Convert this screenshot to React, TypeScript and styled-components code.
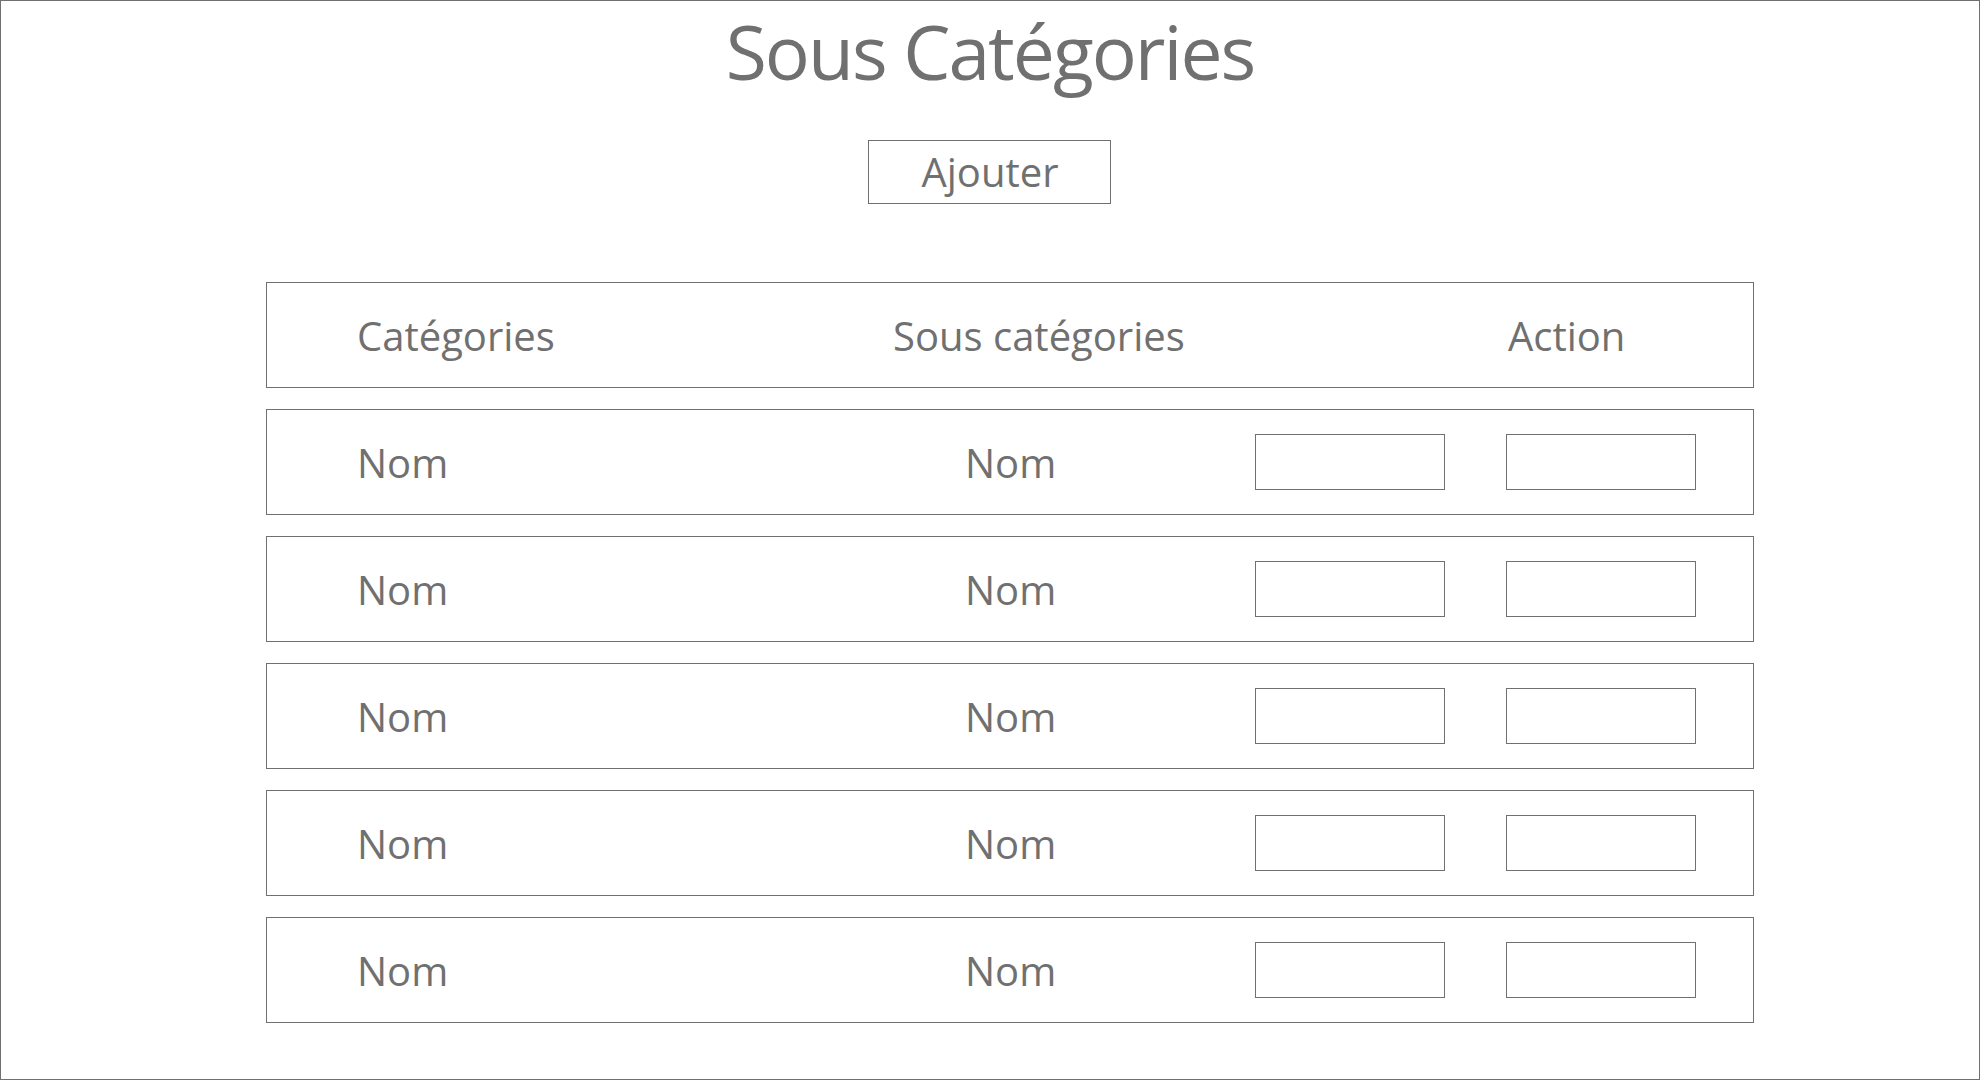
import React from 'react';
import styled, { createGlobalStyle } from 'styled-components';

const GlobalStyle = createGlobalStyle`
	html, body {
		margin: 0;
		padding: 0;
		background: #ffffff;
	}

	* {
		box-sizing: border-box;
	}
`;

const rows = ['Nom', 'Nom', 'Nom', 'Nom', 'Nom'];

function App() {
	return (
		<>
			<GlobalStyle />
			<Page>
				<TopSection>
					<Title>Sous Catégories</Title>
					<AddButton type="button">Ajouter</AddButton>
				</TopSection>
				<Table>
					<HeaderRow>
						<Cell>Catégories</Cell>
						<Cell>Sous catégories</Cell>
						<Cell>Action</Cell>
					</HeaderRow>
					{rows.map((name, index) => (
						<DataRow key={index}>
							<Cell>{name}</Cell>
							<Cell>{name}</Cell>
							<ActionGroup>
								<ActionBox />
								<ActionBox />
							</ActionGroup>
						</DataRow>
					))}
				</Table>
			</Page>
		</>
	);
}

export default App;

const Page = styled.div`
	width: 1980px;
	height: 1080px;
	border: 1px solid #707070;
	display: flex;
	flex-direction: column;
	align-items: center;

	font-family: "Open Sans", "Noto Sans", sans-serif;
	color: #707070;
	background: #ffffff;
`;

const TopSection = styled.div`
	display: flex;
	flex-direction: column;
	align-items: center;
	padding-top: 13px;
`;

const Title = styled.h1`
	margin: 0;
	font-size: 75px;
	font-weight: 400;
	line-height: 1;
	letter-spacing: -2px;
`;

const AddButton = styled.button`
	margin-top: 51px;
	width: 243px;
	height: 64px;
	padding: 0;
	border: 1px solid #707070;
	background: #ffffff;

	font-family: inherit;
	font-size: 40px;
	line-height: 1;
	color: #707070;
`;

const Table = styled.div`
	align-self: flex-start;
	margin-top: 78px;
	margin-left: 265px;
	width: 1488px;
	display: flex;
	flex-direction: column;
	gap: 21px;
`;

const RowBase = styled.div`
	height: 106px;
	border: 1px solid #707070;
	display: grid;
	align-items: center;
	padding-left: 90px;
	padding-top: 2px;
`;

const HeaderRow = styled(RowBase)`
	grid-template-columns: 536px 615px 1fr;
`;

const DataRow = styled(RowBase)`
	grid-template-columns: 608px 290px auto;
`;

const Cell = styled.div`
	font-size: 40px;
	line-height: 1;
	white-space: nowrap;
`;

const ActionGroup = styled.div`
	display: flex;
	gap: 61px;
	margin-top: -2px;
`;

const ActionBox = styled.div`
	width: 190px;
	height: 56px;
	border: 1px solid #707070;
`;
